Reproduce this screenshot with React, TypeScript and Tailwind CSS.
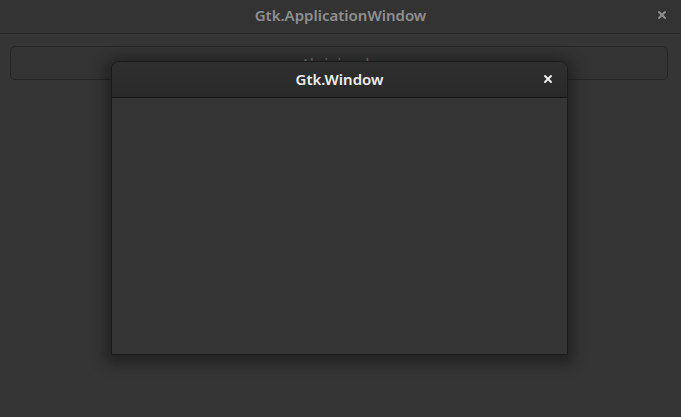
import { X } from "lucide-react";

export default function App() {
  return (
    <div
      className="relative w-[681px] h-[417px] overflow-hidden bg-[#353535]"
      style={{ fontFamily: '"Noto Sans", "Open Sans", sans-serif' }}
    >
      {/* main window header */}
      <div className="relative h-[34px] flex items-center justify-center bg-[#333333] border-b border-[#262626]">
        <span className="text-[15px] font-semibold text-[#8f8f8f] leading-none -mt-[3px]">
          Gtk.ApplicationWindow
        </span>
        <X
          className="absolute right-[13px] top-[9px] text-[#8f8f8f]"
          size={12}
          strokeWidth={4}
        />
      </div>

      <div className="pt-[12px] pl-[10px] pr-[13px]">
        <button className="w-full h-[34px] rounded-[5px] border border-[#262626] bg-[#333333] text-[#7a7a7a] text-[14px]">
          Abrir janela
        </button>
      </div>

      {/* modal dialog */}
      <div className="absolute left-[111px] top-[61px] w-[457px] h-[294px] flex flex-col rounded-t-[8px] border border-[#1b1b1b] bg-[#353535] shadow-[0_3px_14px_6px_rgba(0,0,0,0.35)]">
        <div className="relative h-[36px] flex items-center justify-center rounded-t-[7px] bg-gradient-to-b from-[#2e2e2e] to-[#2a2a2a] border-b border-[#141414]">
          <span className="text-[15px] font-semibold text-[#eeeeec] leading-none">
            Gtk.Window
          </span>
          <X
            className="absolute right-[13px] top-[11px] text-[#eeeeec]"
            size={12}
            strokeWidth={4}
          />
        </div>
        <div className="flex-1" />
      </div>
    </div>
  );
}
